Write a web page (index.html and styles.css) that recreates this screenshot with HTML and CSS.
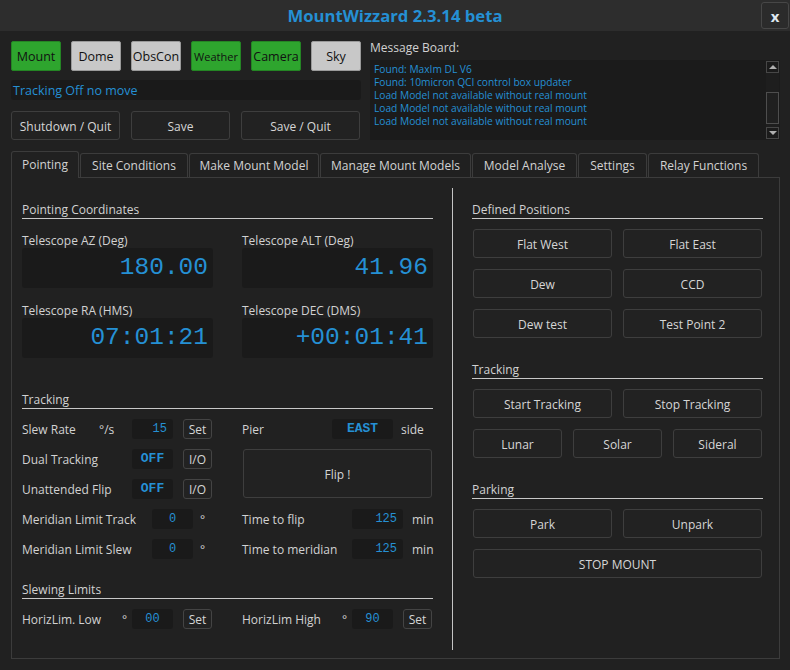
FILE: index.html
```html
<!DOCTYPE html>
<html>
<head>
<meta charset="utf-8">
<title>MountWizzard</title>
<link rel="stylesheet" href="styles.css">
</head>
<body>
<div class="window">
  <header class="titlebar">
    <span></span>
    <h1 class="title">MountWizzard 2.3.14 beta</h1>
    <button class="close">x</button>
  </header>

  <div class="top">
    <div class="top-left">
      <div class="dev-row">
        <button class="dev on">Mount</button>
        <button class="dev off">Dome</button>
        <button class="dev off">ObsCon</button>
        <button class="dev on small">Weather</button>
        <button class="dev on">Camera</button>
        <button class="dev off">Sky</button>
      </div>
      <div class="status">Tracking Off no move</div>
      <div class="action-row">
        <button class="btn">Shutdown / Quit</button>
        <button class="btn">Save</button>
        <button class="btn">Save / Quit</button>
      </div>
    </div>
    <div class="msg">
      <div class="msg-label">Message Board:</div>
      <div class="msg-box">
        <div class="msg-text">
          <div>Found: MaxIm DL V6</div>
          <div>Found: 10micron QCI control box updater</div>
          <div>Load Model not available without real mount</div>
          <div>Load Model not available without real mount</div>
          <div>Load Model not available without real mount</div>
        </div>
        <div class="scrollbar">
          <div class="sb-arrow"><span class="tri up"></span></div>
          <div class="sb-track"><div class="sb-handle"></div></div>
          <div class="sb-arrow"><span class="tri down"></span></div>
        </div>
      </div>
    </div>
  </div>

  <nav class="tabs">
    <div class="tab t1 active">Pointing</div>
    <div class="tab t2">Site Conditions</div>
    <div class="tab t3">Make Mount Model</div>
    <div class="tab t4">Manage Mount Models</div>
    <div class="tab t5">Model Analyse</div>
    <div class="tab t6">Settings</div>
    <div class="tab t7">Relay Functions</div>
  </nav>

  <section class="panel">
    <div class="col-left">
      <div class="sec">Pointing Coordinates</div>
      <div class="coords">
        <div class="coord">
          <div class="lbl">Telescope AZ (Deg)</div>
          <div class="display">180.00</div>
        </div>
        <div class="coord">
          <div class="lbl">Telescope ALT (Deg)</div>
          <div class="display">41.96</div>
        </div>
        <div class="coord">
          <div class="lbl">Telescope RA (HMS)</div>
          <div class="display">07:01:21</div>
        </div>
        <div class="coord">
          <div class="lbl">Telescope DEC (DMS)</div>
          <div class="display">+00:01:41</div>
        </div>
      </div>

      <div class="sec sec-tracking">Tracking</div>
      <div class="tgrid">
        <div class="cell">
          <span class="lbl w77">Slew Rate</span><span class="unit w33">°/s</span><span class="val w41 right">15</span><button class="mini">Set</button>
        </div>
        <div class="cell">
          <span class="lbl w90">Pier</span><span class="val w61 bold">EAST</span><span class="suffix s8">side</span>
        </div>
        <div class="cell">
          <span class="lbl w110">Dual Tracking</span><span class="val w41 bold">OFF</span><button class="mini">I/O</button>
        </div>
        <button class="btn flip">Flip !</button>
        <div class="cell">
          <span class="lbl w110">Unattended Flip</span><span class="val w41 bold">OFF</span><button class="mini">I/O</button>
        </div>
        <div class="cell">
          <span class="lbl w130">Meridian Limit Track</span><span class="val w41">0</span><span class="suffix s7">°</span>
        </div>
        <div class="cell">
          <span class="lbl w110">Time to flip</span><span class="val w51 right">125</span><span class="suffix s9">min</span>
        </div>
        <div class="cell">
          <span class="lbl w130">Meridian Limit Slew</span><span class="val w41">0</span><span class="suffix s7">°</span>
        </div>
        <div class="cell">
          <span class="lbl w110">Time to meridian</span><span class="val w51 right">125</span><span class="suffix s9">min</span>
        </div>
      </div>

      <div class="sec sec-slew">Slewing Limits</div>
      <div class="tgrid single">
        <div class="cell">
          <span class="lbl w100">HorizLim. Low</span><span class="unit w10">°</span><span class="val w41">00</span><button class="mini">Set</button>
        </div>
        <div class="cell">
          <span class="lbl w100">HorizLim High</span><span class="unit w10">°</span><span class="val w41">90</span><button class="mini">Set</button>
        </div>
      </div>
    </div>

    <div class="divider"></div>

    <div class="col-right">
      <div class="sec">Defined Positions</div>
      <div class="bgrid two">
        <button class="btn">Flat West</button>
        <button class="btn">Flat East</button>
        <button class="btn">Dew</button>
        <button class="btn">CCD</button>
        <button class="btn">Dew test</button>
        <button class="btn">Test Point 2</button>
      </div>

      <div class="sec sec-r">Tracking</div>
      <div class="bgrid two">
        <button class="btn">Start Tracking</button>
        <button class="btn">Stop Tracking</button>
      </div>
      <div class="bgrid three">
        <button class="btn">Lunar</button>
        <button class="btn">Solar</button>
        <button class="btn">Sideral</button>
      </div>

      <div class="sec sec-r">Parking</div>
      <div class="bgrid two">
        <button class="btn">Park</button>
        <button class="btn">Unpark</button>
      </div>
      <div class="bgrid one">
        <button class="btn">STOP MOUNT</button>
      </div>
    </div>
  </section>
</div>
</body>
</html>
```

FILE: styles.css
```css
* { box-sizing: border-box; }

html, body {
  margin: 0;
  padding: 0;
  background: #212121;
}

body {
  width: 790px;
  height: 670px;
  overflow: hidden;
  font-family: "Open Sans", "Noto Sans", sans-serif;
  font-size: 12px;
  color: #d2d2d2;
}

button {
  font-family: inherit;
  font-size: 12px;
  margin: 0;
  padding: 0;
  cursor: default;
}

/* ---------- title bar ---------- */
.titlebar {
  height: 31px;
  background: #2d2d2d;
  display: grid;
  grid-template-columns: 1fr auto 1fr;
  align-items: start;
}

.title {
  margin: 0;
  font-size: 16.7px;
  line-height: 31px;
  font-weight: 700;
  color: #2590d4;
}

.close {
  justify-self: end;
  margin: 2px 1px 0 0;
  width: 28px;
  height: 27px;
  background: #2b2b2b;
  border: 1px solid #474747;
  border-radius: 3px;
  color: #dfe8f0;
  font-weight: 700;
  font-size: 15px;
  line-height: 22px;
}

/* ---------- top area ---------- */
.top {
  display: flex;
  gap: 9px;
  padding: 10px 10px 0 11px;
}

.top-left {
  width: 350px;
}

.dev-row {
  display: flex;
  gap: 10px;
  height: 30px;
}

.dev {
  width: 50px;
  height: 30px;
  border-radius: 2px;
  color: #111;
  font-size: 12.5px;
  padding-top: 1px;
}

.dev.small { font-size: 11px; }

.dev.on {
  background: #2ea52e;
  border: 1px solid #248524;
}

.dev.off {
  background: #c8c8c8;
  border: 1px solid #9a9a9a;
}

.status {
  margin-top: 9px;
  height: 20px;
  width: 350px;
  background: #1a1a1a;
  border-radius: 3px;
  color: #2590d4;
  font-size: 12.5px;
  line-height: 21px;
  padding-left: 2px;
}

.action-row {
  margin-top: 11px;
  display: grid;
  grid-template-columns: 109px 99px 119px;
  gap: 11px;
}

.btn {
  height: 29px;
  background: #222222;
  border: 1px solid #3e3e3e;
  border-radius: 3px;
  color: #d6d6d6;
  font-size: 12px;
  padding-top: 2px;
}

.msg {
  width: 410px;
}

.msg-label {
  line-height: 14px;
  height: 14px;
  color: #d2d2d2;
}

.msg-box {
  margin-top: 5px;
  height: 80px;
  background: #1b1b1b;
  display: flex;
}

.msg-text {
  flex: 1;
  padding: 3px 0 0 4px;
  color: #2590d4;
  font-size: 10.2px;
  line-height: 13px;
  white-space: nowrap;
}

.scrollbar {
  width: 13px;
  margin-right: 1px;
  display: flex;
  flex-direction: column;
  padding: 1px 0;
}

.sb-arrow {
  height: 12px;
  border: 1px solid #474747;
  display: flex;
  align-items: center;
  justify-content: center;
}

.tri {
  width: 0;
  height: 0;
  border-left: 4px solid transparent;
  border-right: 4px solid transparent;
}

.tri.up { border-bottom: 4px solid #b0b0b0; }
.tri.down { border-top: 4px solid #b0b0b0; }

.sb-track {
  flex: 1;
  background: #1e1e1e;
  padding: 19px 0 3px;
}

.sb-handle {
  height: 32px;
  border: 1px solid #4e4e4e;
  background: #202020;
}

/* ---------- tabs ---------- */
.tabs {
  margin-top: 11px;
  padding-left: 11px;
  display: flex;
  align-items: flex-end;
  gap: 1px;
  height: 26px;
  position: relative;
  z-index: 1;
}

.tab {
  flex: none;
  height: 24px;
  border: 1px solid #3c3c3c;
  border-bottom: none;
  border-radius: 3px 3px 0 0;
  background: #202020;
  color: #d2d2d2;
  font-size: 12px;
  line-height: 24px;
  text-align: center;
  white-space: nowrap;
}

.t1 { width: 68px; }
.t2 { width: 108px; }
.t3 { width: 130px; }
.t4 { width: 151px; }
.t5 { width: 105px; }
.t6 { width: 69px; }
.t7 { width: 111px; }

.tab.active {
  height: 27px;
  margin-bottom: -1px;
  background: #212121;
  line-height: 26px;
}

/* ---------- panel ---------- */
.panel {
  margin-left: 11px;
  width: 769px;
  height: 482px;
  border: 1px solid #3c3c3c;
  display: flex;
  padding-left: 10px;
}

.col-left {
  width: 411px;
  padding-top: 24px;
}

.col-right {
  width: 291px;
  padding-top: 24px;
}

.divider {
  width: 1px;
  margin: 10px 19px 8px;
  background: #c4c4c4;
}

.sec {
  height: 17px;
  line-height: 16px;
  border-bottom: 1px solid #c8c8c8;
  color: #d2d2d2;
}

.sec-tracking { margin-top: 34px; }
.sec-slew { margin-top: 23px; }
.sec-r { margin-top: 24px; }

.coords {
  margin-top: 13px;
  display: grid;
  grid-template-columns: 191px 191px;
  column-gap: 29px;
  row-gap: 14px;
}

.coord .lbl {
  line-height: 18px;
  height: 16px;
}

.display {
  height: 40px;
  background: #1a1a1a;
  border-radius: 3px;
  text-align: right;
  padding-right: 5px;
  font-family: "Liberation Mono", monospace;
  font-size: 24.5px;
  line-height: 40px;
  color: #2590d4;
}

.tgrid {
  margin-top: 10px;
  display: grid;
  grid-template-columns: 191px 191px;
  grid-auto-rows: 20px;
  column-gap: 29px;
  row-gap: 10px;
}

.cell {
  display: flex;
  align-items: center;
  height: 20px;
}

.cell .lbl, .cell .unit, .cell .suffix {
  line-height: 22px;
  height: 20px;
  white-space: nowrap;
}

.w10 { width: 10px; flex: none; }
.w33 { width: 33px; flex: none; }
.w41 { width: 41px; flex: none; }
.w51 { width: 51px; flex: none; }
.w61 { width: 61px; flex: none; }
.w77 { width: 77px; flex: none; }
.w90 { width: 90px; flex: none; }
.w100 { width: 100px; flex: none; }
.w110 { width: 110px; flex: none; }
.w130 { width: 130px; flex: none; }

.s7 { margin-left: 7px; }
.s8 { margin-left: 8px; }
.s9 { margin-left: 9px; }

.val {
  height: 20px;
  background: #1a1a1a;
  border-radius: 3px;
  font-family: "Liberation Mono", monospace;
  font-size: 12px;
  line-height: 20px;
  color: #2590d4;
  text-align: center;
}

.val.right {
  text-align: right;
  padding-right: 6px;
}

.val.bold {
  font-weight: 700;
  font-size: 13px;
}

.mini {
  margin-left: 10px;
  width: 29px;
  height: 20px;
  background: #222222;
  border: 1px solid #444444;
  border-radius: 3px;
  color: #d6d6d6;
  font-size: 12px;
  padding-top: 1px;
}

.flip {
  grid-column: 2;
  grid-row: 2 / span 2;
  height: 49px;
  margin-left: 1px;
  width: 189px;
}

.bgrid {
  margin-top: 10px;
  padding: 0 1px;
  display: grid;
  gap: 11px;
}

.bgrid + .bgrid { margin-top: 11px; }

.bgrid.two { grid-template-columns: 139px 139px; }
.bgrid.three { grid-template-columns: 89px 89px 89px; }
.bgrid.one { grid-template-columns: 289px; }
```
